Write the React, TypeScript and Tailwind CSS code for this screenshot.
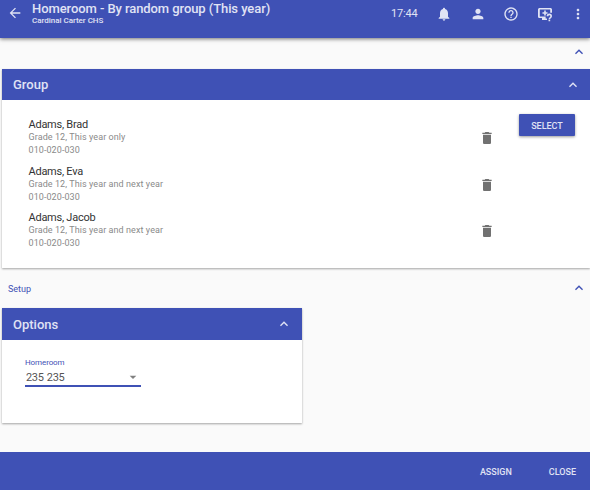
const PATHS = {
  back: 'M20 11H7.83l5.59-5.59L12 4l-8 8 8 8 1.41-1.41L7.83 13H20v-2z',
  bell: 'M12 22c1.1 0 2-.9 2-2h-4c0 1.1.89 2 2 2zm6-6v-5c0-3.07-1.64-5.64-4.5-6.32V4c0-.83-.67-1.5-1.5-1.5s-1.5.67-1.5 1.5v.68C7.63 5.36 6 7.92 6 11v5l-2 2v1h16v-1l-2-2z',
  person: 'M12 12c2.21 0 4-1.79 4-4s-1.79-4-4-4-4 1.79-4 4 1.79 4 4 4zm0 2c-2.67 0-8 1.34-8 4v2h16v-2c0-2.66-5.33-4-8-4z',
  help: 'M11 18h2v-2h-2v2zm1-16C6.48 2 2 6.48 2 12s4.48 10 10 10 10-4.48 10-10S17.52 2 12 2zm0 18c-4.41 0-8-3.59-8-8s3.59-8 8-8 8 3.59 8 8-3.59 8-8 8zm0-14c-2.21 0-4 1.79-4 4h2c0-1.1.9-2 2-2s2 .9 2 2c0 2-3 1.75-3 5h2c0-2.25 3-2.5 3-5 0-2.21-1.79-4-4-4z',
  queue: 'M20 3H4c-1.4 0-2.5 1-2.5 2.4v10.2C1.5 17 2.6 18 4 18h3.5v3H15v-2.4h-2V15.7H4.2V5.4h15.6V10h2.7V5.4C22.5 4 21.4 3 20 3zm-6.8 3.7h-2.4v2.6H8.2v2.4h2.6v2.6h2.4v-2.6h2.6V9.300h-2.600zM14.500 15.200a4 4 0 0 1 8 0c0 2.600-2.700 2.700-2.700 4.800h-2.500c0-3 2.700-3.200 2.700-4.800a1.500 1.500 0 0 0-3 0zM17.300 20.800h2.500V23h-2.500z',
  more: 'M12 8c1.1 0 2-.9 2-2s-.9-2-2-2-2 .9-2 2 .9 2 2 2zm0 2c-1.1 0-2 .9-2 2s.9 2 2 2 2-.9 2-2-.9-2-2-2zm0 6c-1.1 0-2 .9-2 2s.9 2 2 2 2-.9 2-2-.9-2-2-2z',
  up: 'M7.41 15.41L12 10.83l4.59 4.58L18 14l-6-6-6 6z',
  trash: 'M6 19c0 1.1.9 2 2 2h8c1.1 0 2-.9 2-2V7H6v12zM19 4h-3.5l-1-1h-5l-1 1H5v2h14V4z',
  down: 'M7 10l5 5 5-5z',
};

function Icon({ name, className = '' }: { name: keyof typeof PATHS; className?: string }) {
  return (
    <svg viewBox="0 0 24 24" fill="currentColor" className={`size-4 shrink-0 ${className}`}>
      <path d={PATHS[name]} />
    </svg>
  );
}

const STUDENTS = [
  { name: 'Adams, Brad', detail: 'Grade 12, This year only', id: '010-020-030' },
  { name: 'Adams, Eva', detail: 'Grade 12, This year and next year', id: '010-020-030' },
  { name: 'Adams, Jacob', detail: 'Grade 12, This year and next year', id: '010-020-030' },
];

export default function App() {
  return (
    <div className="flex h-[490px] w-[590px] flex-col overflow-hidden bg-[#fafafa] font-[Roboto,sans-serif]">
      <header className="relative flex h-[38px] shrink-0 items-start bg-[#3f51b5] text-[#e0e3f4] shadow-[0_1px_4px_rgba(0,0,0,0.55)]">
        <Icon name="back" className="mt-[5px] ml-[7px]" />
        <div className="ml-[9px] flex flex-col whitespace-nowrap">
          <h1 className="h-4 text-[13px] leading-[17px] font-medium tracking-[-0.08px]">Homeroom - By random group (This year)</h1>
          <p className="text-[8px] leading-[9px] font-medium tracking-[-0.02px]">Cardinal Carter CHS</p>
        </div>
        <div className="mt-[5px] mr-1 ml-auto flex items-center">
          <span className="mr-[19px] pt-px text-[11px] leading-4 tracking-[-0.2px]">17:44</span>
          <div className="flex items-center gap-[17.4px]">
            <Icon name="bell" />
            <Icon name="person" />
            <Icon name="help" />
            <Icon name="queue" />
            <Icon name="more" />
          </div>
        </div>
      </header>

      <main className="flex min-h-0 flex-1 flex-col">
        <div className="flex h-[31px] shrink-0 justify-end pt-[6px] pr-[3px] text-[#3f51b5]">
          <Icon name="up" />
        </div>

        <section className="ml-[2px] flex h-[199px] shrink-0 flex-col bg-white shadow-[0_1px_2px_rgba(0,0,0,0.35)]">
          <div className="flex h-[31px] shrink-0 items-center justify-between bg-[#3f51b5] pr-[9px] pl-[11px] text-[#e0e3f4]">
            <h2 className="text-[13px] font-medium">Group</h2>
            <Icon name="up" />
          </div>
          <div className="flex items-start justify-between pr-[15px] pl-[26px]">
            <ul className="flex w-[467px] flex-col pt-[18px]">
              {STUDENTS.map((s) => (
                <li key={s.name} className="flex h-[46.5px] justify-between">
                  <div className="flex flex-col pl-[0.5px] whitespace-nowrap">
                    <span className="text-[11px] leading-[13px] tracking-[-0.25px] text-[#333]">{s.name}</span>
                    <span className="text-[9px] leading-[13px] tracking-[0.08px] text-[#8a8a8a]">{s.detail}</span>
                    <span className="text-[9px] leading-[13px] tracking-[0.08px] text-[#8a8a8a]">{s.id}</span>
                  </div>
                  <Icon name="trash" className="mt-3 text-[#717171]" />
                </li>
              ))}
            </ul>
            <button className="mt-[14px] h-[22px] w-14 rounded-[1px] bg-[#3f51b5] pt-[3px] text-[9px] font-medium text-[#e0e3f4] shadow-[0_1px_3px_rgba(0,0,0,0.4)]">
              SELECT
            </button>
          </div>
        </section>

        <div className="flex h-10 shrink-0 items-center justify-between pr-[3px] pl-2 text-[#3f51b5]">
          <span className="pt-[3px] text-[9px]">Setup</span>
          <Icon name="up" />
        </div>

        <section className="ml-[2px] flex h-[115px] w-[300px] shrink-0 flex-col bg-white shadow-[0_1px_2px_rgba(0,0,0,0.35)]">
          <div className="flex h-[32px] shrink-0 items-center justify-between bg-[#3f51b5] pr-[10px] pl-[11px] text-[#e0e3f4]">
            <h2 className="pt-px text-[13px] font-medium">Options</h2>
            <Icon name="up" />
          </div>
          <div className="flex flex-col pt-[18px] pl-[23px]">
            <label className="text-[8px] leading-[10px] tracking-[-0.1px] text-[#3f51b5]">Homeroom</label>
            <div className="flex h-[19px] w-[116px] items-center justify-between border-b-2 border-[#3f51b5] pl-px text-[#555]">
              <span className="pt-[3px] text-[11px] tracking-[-0.35px] [word-spacing:1px]">235 235</span>
              <Icon name="down" className="text-[#808080]" />
            </div>
          </div>
        </section>
      </main>

      <footer className="flex h-[38px] shrink-0 items-center justify-end gap-[37px] bg-[#3f51b5] pt-[3px] pr-[14px] text-[9px] font-medium text-[#e0e3f4]">
        <button>ASSIGN</button>
        <button>CLOSE</button>
      </footer>
    </div>
  );
}
